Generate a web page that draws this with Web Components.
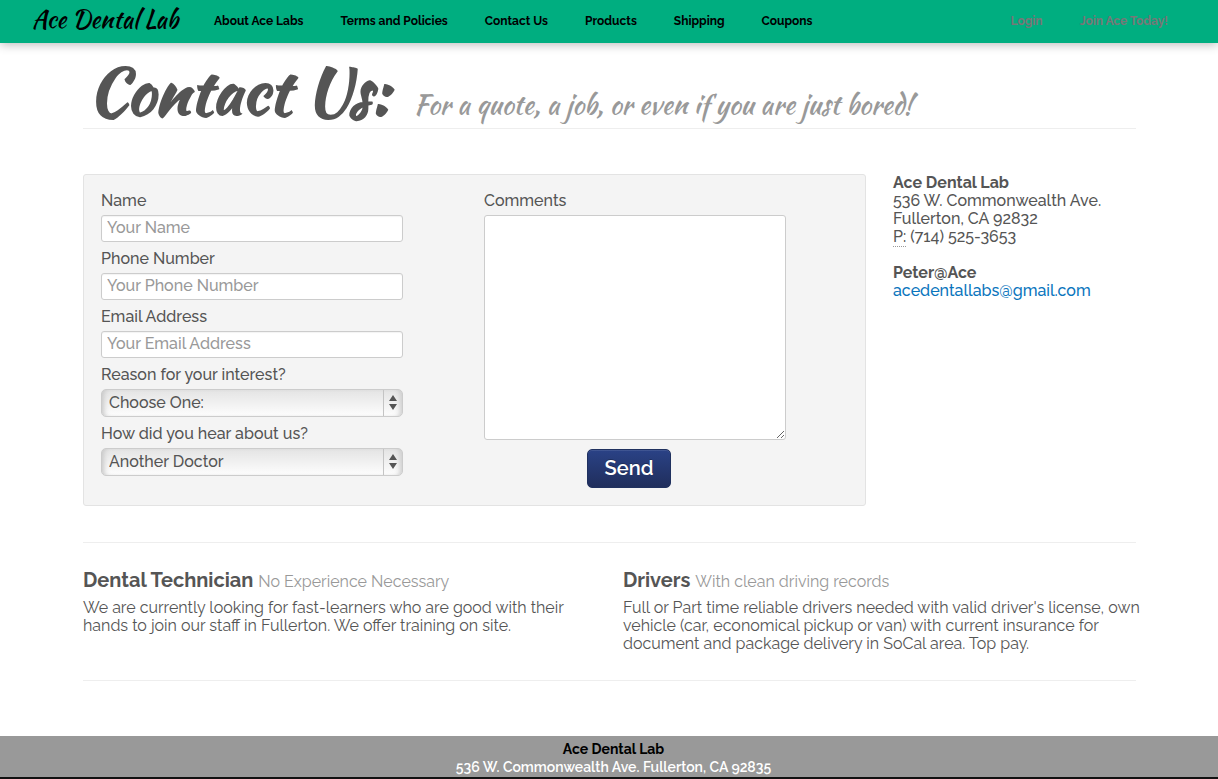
<!DOCTYPE html>
<html lang="en">
<head>
<meta charset="utf-8">
<meta name="viewport" content="width=device-width, initial-scale=1">
<title>Contact Us - Ace Dental Lab</title>
<style>
  html, body { margin: 0; background: #fff; }
  body {
    --text: #555;
    --muted: #999;
    --rule: #eee;
    --script: "Satisfy", "Kaushan Script", "Lato", cursive;
    font: 500 16px/18px "Raleway", "Lato", sans-serif;
    color: var(--text);
  }
  main { display: flow-root; margin: 0 82px 0 83px; }
</style>
</head>
<body>
<ace-navbar>
  <ace-nav-link href="#about">About Ace Labs</ace-nav-link>
  <ace-nav-link href="#terms">Terms and Policies</ace-nav-link>
  <ace-nav-link href="#contact">Contact Us</ace-nav-link>
  <ace-nav-link href="#products">Products</ace-nav-link>
  <ace-nav-link href="#shipping">Shipping</ace-nav-link>
  <ace-nav-link href="#coupons">Coupons</ace-nav-link>
  <ace-nav-link slot="account" quiet href="#login">Login</ace-nav-link>
  <ace-nav-link slot="account" quiet href="#join">Join Ace Today!</ace-nav-link>
</ace-navbar>
<main>
  <ace-page-header>Contact Us:<span slot="tagline">For a quote, a job, or even if you are just bored!</span></ace-page-header>
  <ace-split>
    <ace-contact-form></ace-contact-form>
    <ace-address slot="aside"></ace-address>
  </ace-split>
  <ace-jobs>
    <ace-job>
      <span slot="title">Dental Technician</span>
      <span slot="note">No Experience Necessary</span>
      We are currently looking for fast-learners who are good with their hands to join our staff in Fullerton. We offer training on site.
    </ace-job>
    <ace-job>
      <span slot="title">Drivers</span>
      <span slot="note">With clean driving records</span>
      Full or Part time reliable drivers needed with valid driver's license, own vehicle (car, economical pickup or van) with current insurance for document and package delivery in SoCal area. Top pay.
    </ace-job>
  </ace-jobs>
</main>
<ace-footer></ace-footer>

<script>
const define = (name, html, setup) => {
  const template = document.createElement('template');
  template.innerHTML = html;
  customElements.define(name, class extends HTMLElement {
    constructor() {
      super();
      this.attachShadow({ mode: 'open' }).append(template.content.cloneNode(true));
    }
    connectedCallback() { if (setup) setup(this, this.shadowRoot); }
  });
};

define('ace-nav-link', `
  <style>
    :host { display: block; }
    a { color: #000; text-decoration: none; white-space: nowrap; }
    :host([quiet]) a { color: #777; }
  </style>
  <a><slot></slot></a>`,
  (el, root) => { root.querySelector('a').href = el.getAttribute('href'); });

define('ace-navbar', `
  <style>
    :host { display: block; position: relative; background: #00ae80; box-shadow: 0 1px 10px rgba(0,0,0,.3); }
    nav { display: flex; align-items: center; height: 43px; padding: 0 50px 0 32px; font-size: 12px; font-weight: 700; }
    .brand { flex: 0 0 182px; font: 400 24px/28px var(--script); color: #000; text-decoration: none; white-space: nowrap; padding-bottom: 4px; }
    .links, .account { display: flex; gap: 37px; padding-bottom: 2px; }
    .account { margin-left: auto; }
  </style>
  <nav aria-label="Main">
    <a class="brand" href="#home">Ace Dental Lab</a>
    <div class="links"><slot></slot></div>
    <div class="account"><slot name="account"></slot></div>
  </nav>`);

define('ace-page-header', `
  <style>
    :host { display: block; border-bottom: 1px solid var(--rule); }
    h1 { display: flex; align-items: baseline; gap: 24px; margin: 0; padding: 12px 5px 1px; font: 700 64px/72px var(--script); white-space: nowrap; }
    small { font-size: 27px; line-height: 27px; font-weight: 400; color: var(--muted); }
  </style>
  <h1><span><slot></slot></span><small><slot name="tagline"></slot></small></h1>`);

define('ace-split', `
  <style>
    :host { display: grid; grid-template-columns: 783fr 243fr; gap: 27px; align-items: start; margin-top: 45px; }
  </style>
  <slot></slot><slot name="aside"></slot>`);

define('ace-field', `
  <style>
    :host { display: block; }
    label { display: block; line-height: 18px; margin-bottom: 5px; }
    input {
      display: block; box-sizing: border-box; width: 100%; height: 27px; padding: 0 5px 2px;
      border: 1px solid #ccc; border-radius: 3px; background: #fff; font: inherit; color: inherit;
      box-shadow: inset 0 1px 1px rgba(0,0,0,.05);
    }
    input::placeholder { color: #999; opacity: 1; }
  </style>
  <label for="control"></label><input id="control">`,
  (el, root) => {
    root.querySelector('label').textContent = el.getAttribute('label');
    const input = root.querySelector('input');
    input.type = el.getAttribute('type') || 'text';
    input.placeholder = el.getAttribute('placeholder');
  });

define('ace-select', `
  <style>
    :host { display: block; }
    label { display: block; line-height: 18px; margin-bottom: 5px; }
    .box { position: relative; }
    select {
      appearance: none; display: block; box-sizing: border-box; width: 100%; height: 28px; padding: 0 24px 1px 7px;
      border: 1px solid #ccc; border-radius: 5px; font: inherit; color: inherit;
      background: linear-gradient(#e4e4e4, #fdfdfd);
      box-shadow: inset 5px 0 5px -3px #c8c8c8, inset -5px 0 5px -3px #ccc;
    }
    svg { position: absolute; top: 1px; right: 1px; width: 19px; height: 26px; pointer-events: none; }
  </style>
  <label for="control"></label>
  <div class="box">
    <select id="control"></select>
    <svg viewBox="0 0 19 26" aria-hidden="true">
      <path d="M.5 0v26" stroke="#c4c4c4"/>
      <path d="M10 5l4 6H6zM10 20l4-6H6z" fill="#555"/>
    </svg>
  </div>`,
  (el, root) => {
    root.querySelector('label').textContent = el.getAttribute('label');
    root.querySelector('select').append(...el.querySelectorAll('option'));
  });

define('ace-contact-form', `
  <style>
    :host { display: block; }
    form {
      display: grid; grid-template-columns: 1fr 1fr; gap: 18px; padding: 17px 16px 17px 17px;
      background: #f4f4f4; border: 1px solid #e3e3e3; border-radius: 3px;
    }
    .fields { display: grid; gap: 8px; align-content: start; }
    .fields, .message { width: 302px; max-width: 100%; }
    label { display: block; line-height: 18px; margin-bottom: 5px; }
    textarea {
      display: block; box-sizing: border-box; width: 100%; height: 225px; padding: 4px 5px;
      border: 1px solid #ccc; border-radius: 3px; font: inherit; color: inherit; background: #fff;
    }
    button {
      display: block; margin: 9px 0 0 103px; width: 84px; height: 39px; padding: 0 0 1px;
      border: 1px solid #20315f; border-radius: 5px; background: linear-gradient(#2a4286, #202e5c);
      box-shadow: inset 0 1px 0 rgba(255,255,255,.1); color: #fff; font: inherit; font-size: 20px; font-weight: 600;
      text-shadow: 0 -1px 0 rgba(0,0,0,.25);
    }
  </style>
  <form>
    <div class="fields">
      <ace-field label="Name" placeholder="Your Name"></ace-field>
      <ace-field label="Phone Number" type="tel" placeholder="Your Phone Number"></ace-field>
      <ace-field label="Email Address" type="email" placeholder="Your Email Address"></ace-field>
      <ace-select label="Reason for your interest?"><option>Choose One:</option></ace-select>
      <ace-select label="How did you hear about us?"><option>Another Doctor</option></ace-select>
    </div>
    <div class="message">
      <label for="comments">Comments</label>
      <textarea id="comments"></textarea>
      <button type="button">Send</button>
    </div>
  </form>`);

define('ace-address', `
  <style>
    :host { display: block; }
    address { font-style: normal; margin-bottom: 18px; white-space: nowrap; }
    abbr { text-decoration: none; border-bottom: 1px dotted #999; }
    a { color: #0a75bd; text-decoration: none; }
  </style>
  <address><strong>Ace Dental Lab</strong><br>536 W. Commonwealth Ave.<br>Fullerton, CA 92832<br><abbr title="Phone">P:</abbr> (714) 525-3653</address>
  <address><strong>Peter@Ace</strong><br><a href="mailto:acedentallabs@gmail.com">acedentallabs@gmail.com</a></address>`);

define('ace-jobs', `
  <style>
    :host {
      display: grid; grid-template-columns: 1fr 1fr; gap: 27px; margin: 36px 0 55px; padding: 25px 0 27px;
      border: solid var(--rule); border-width: 1px 0;
    }
  </style>
  <slot></slot>`);

define('ace-job', `
  <style>
    :host { display: block; }
    h2 { margin: 0 0 5px; font-size: 20px; line-height: 24px; }
    small { font-size: 16px; font-weight: 400; color: var(--muted); }
    p { margin: 0 -8px 0 0; font-weight: 400; }
  </style>
  <h2><slot name="title"></slot> <small><slot name="note"></slot></small></h2>
  <p><slot></slot></p>`);

define('ace-footer', `
  <style>
    :host { display: block; padding: 4px 0 1px; background: #999; border-bottom: 2px solid #111; color: #fff; text-align: center; font-size: 14px; line-height: 18px; }
    a { color: #000; font-weight: 700; text-decoration: none; }
    p { margin: 0; padding-left: 9px; font-weight: 600; }
  </style>
  <footer><p><a href="#home">Ace Dental Lab</a></p><p>536 W. Commonwealth Ave. Fullerton, CA 92835</p></footer>`);
</script>
</body>
</html>
